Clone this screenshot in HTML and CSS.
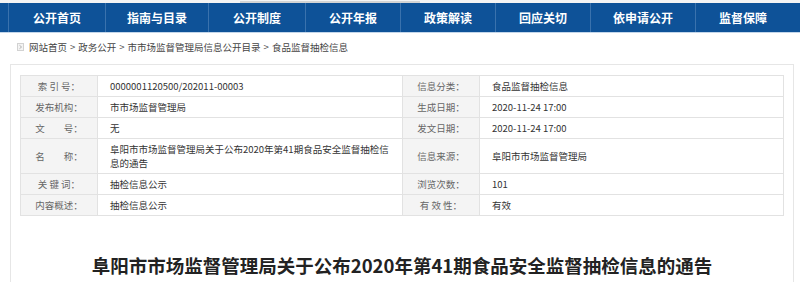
FILE: index.html
```html
<!DOCTYPE html>
<html lang="zh-CN">
<head>
  <meta charset="UTF-8" />
  <title>食品监督抽检信息 | 阜阳市市场监督管理局</title>
  <meta name="viewport" content="width=device-width, initial-scale=1.0" />
  <link rel="stylesheet" href="styles.css">
</head>
<body>
  <div class="top-strip">
    <span class="strip-mark"></span>
  </div>

  <nav class="nav">
    <a href="#">公开首页</a>
    <a href="#">指南与目录</a>
    <a href="#">公开制度</a>
    <a href="#">公开年报</a>
    <a href="#">政策解读</a>
    <a href="#">回应关切</a>
    <a href="#">依申请公开</a>
    <a href="#">监督保障</a>
  </nav>

  <div class="crumbs">
    <svg class="crumb-icon" width="7" height="8" viewBox="0 0 7 8">
      <rect x="0.5" y="0.5" width="6" height="7" fill="#f4f4f4" stroke="#d2d2d2" />
      <path d="M2.5 2.3 L4.6 4 L2.5 5.7" fill="none" stroke="#b5b5b5" stroke-width="1" />
    </svg>
    <a href="#">网站首页</a> &gt; <a href="#">政务公开</a> &gt; <a href="#">市市场监督管理局信息公开目录</a> &gt; <a href="#">食品监督抽检信息</a>
  </div>

  <div class="container">
    <table class="meta">
      <colgroup>
        <col class="c-label">
        <col class="c-value">
        <col class="c-label">
        <col>
      </colgroup>
      <tr>
        <th>索 引 号：</th>
        <td>0000001120500/202011-00003</td>
        <th>信息分类：</th>
        <td>食品监督抽检信息</td>
      </tr>
      <tr>
        <th>发布机构：</th>
        <td>市市场监督管理局</td>
        <th>生成日期：</th>
        <td>2020-11-24 17:00</td>
      </tr>
      <tr>
        <th>文　　号：</th>
        <td>无</td>
        <th>发文日期：</th>
        <td>2020-11-24 17:00</td>
      </tr>
      <tr>
        <th>名　　称：</th>
        <td>阜阳市市场监督管理局关于公布2020年第41期食品安全监督抽检信息的通告</td>
        <th>信息来源：</th>
        <td>阜阳市市场监督管理局</td>
      </tr>
      <tr>
        <th>关 键 词：</th>
        <td>抽检信息公示</td>
        <th>浏览次数：</th>
        <td>101</td>
      </tr>
      <tr>
        <th>内容概述：</th>
        <td>抽检信息公示</td>
        <th>有 效 性：</th>
        <td>有效</td>
      </tr>
    </table>

    <h1 class="title">阜阳市市场监督管理局关于公布2020年第41期食品安全监督抽检信息的通告</h1>
  </div>
</body>
</html>
```

FILE: styles.css
```css
body {
  margin: 0;
  font-family: "Noto Sans CJK SC", "Noto Sans", sans-serif;
  color: #333;
  background: #fff;
}

a {
  color: inherit;
  text-decoration: none;
}

/* bottom edge of the banner above the nav */
.top-strip {
  height: 3px;
  display: flex;
  align-items: flex-end;
  padding-left: 240px;
  background: #f4f4f4;
}

.strip-mark {
  width: 180px;
  height: 2px;
  background: #d4d4d4;
}

.nav {
  display: flex;
  height: 29px;
  padding-left: 8px;
  background: #0e5298;
  border-bottom: 1px solid #c3d6ea;
}

.nav a {
  display: flex;
  align-items: center;
  padding: 0 24px;
  border-left: 1px solid #3a72ad;
  color: #fff;
  font-size: 12px;
  font-weight: 700;
  white-space: nowrap;
}

.nav a:nth-child(2) { padding: 0 21px; }
.nav a:nth-child(4) { padding: 0 23px; }
.nav a:nth-child(5),
.nav a:nth-child(6),
.nav a:nth-child(8) { padding: 0 23px; }
.nav a:nth-child(7) { padding: 0 22px; }

.crumbs {
  display: flex;
  align-items: center;
  gap: 3px;
  padding: 7px 0 10px 17px;
  height: 14px;
  font-size: 9.5px;
  line-height: 14px;
  color: #555;
}

.crumb-icon {
  margin-right: 2px;
}

.crumbs a {
  color: #444;
}

.container {
  margin: 0 6px 0 10px;
  padding: 10px 9px 0;
  border: 1px solid #e6e6e6;
  border-bottom: none;
  height: 220px;
}

.meta {
  width: 100%;
  border-collapse: collapse;
  table-layout: fixed;
  font-size: 9.5px;
  line-height: 14px;
}

.c-label { width: 77px; }
.c-value { width: 305px; }

.meta th,
.meta td {
  border: 1px solid #e2e2e2;
  padding: 3px 0;
}

.meta th {
  background: #f4f4f4;
  color: #666;
  font-weight: 400;
  text-align: center;
  white-space: pre;
}

.meta td {
  padding-left: 12px;
  padding-right: 8px;
  color: #333;
}

.title {
  margin: 36px 0 0;
  text-align: center;
  font-size: 18.5px;
  line-height: 26px;
  font-weight: 700;
  color: #222;
}
```
